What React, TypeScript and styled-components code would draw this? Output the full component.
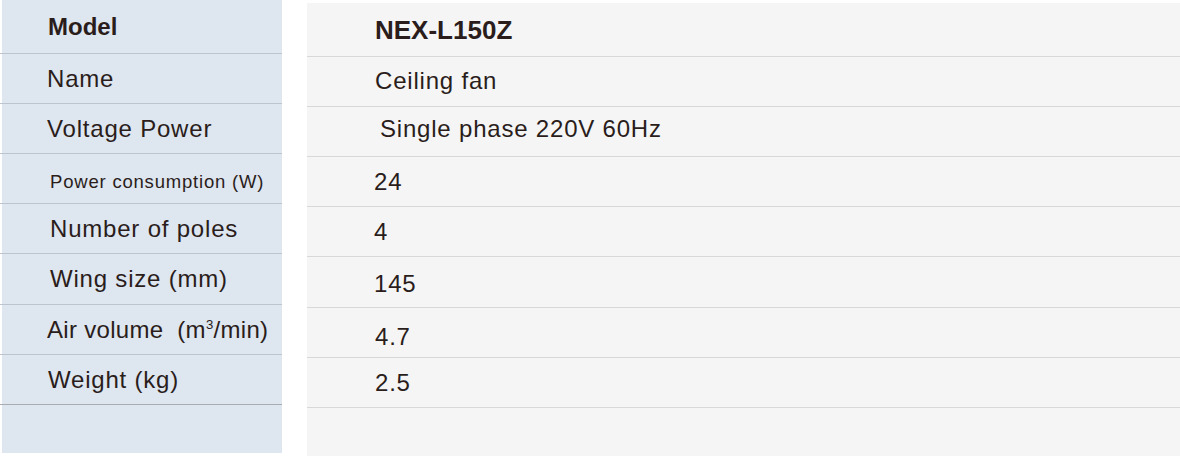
import React from "react";
import styled, { createGlobalStyle } from "styled-components";

const Global = createGlobalStyle`
  html, body { margin: 0; padding: 0; background: #ffffff; }
  body { font-family: "Liberation Sans", Arial, sans-serif; color: #2a1d1b; }
`;

const Page = styled.div`
  width: 1180px;
  height: 457px;
  display: flex;
  align-items: flex-start;
  gap: 25px;
  padding-left: 2px;
  box-sizing: border-box;
`;

const LabelPanel = styled.div`
  width: 280px;
  height: 453px;
  background: #dee6ef;
  display: flex;
  flex-direction: column;
`;

const ValuePanel = styled.div`
  flex: 1;
  height: 453px;
  margin-top: 3px;
  background: #f5f5f5;
  display: flex;
  flex-direction: column;
`;

const Row = styled.div<{ $h: number; $line: string; $indent: number }>`
  height: ${(p) => p.$h}px;
  flex: none;
  box-sizing: border-box;
  border-bottom: 1px solid ${(p) => p.$line};
  display: flex;
  align-items: center;
  padding-left: ${(p) => p.$indent}px;
`;

const LabelRow = styled(Row)`
  margin-left: -2px;
  padding-left: ${(p) => p.$indent + 2}px;
`;

const Text = styled.span<{ $bold?: boolean; $size: number; $dy?: number; $ls?: number }>`
  font-size: ${(p) => p.$size}px;
  font-weight: ${(p) => (p.$bold ? 700 : 400)};
  letter-spacing: ${(p) => (p.$bold ? 0 : p.$ls ?? 0.8)}px;
  line-height: 1;
  white-space: nowrap;
  position: relative;
  top: ${(p) => p.$dy ?? 0}px;
`;

const Sup = styled.sup`
  font-size: 0.55em;
  vertical-align: 0.7em;
  line-height: 0;
`;

type Spec = {
  label: React.ReactNode;
  labelIndent: number;
  labelSize: number;
  labelBold?: boolean;
  labelDy?: number;
  labelLs?: number;
  value: string;
  valueIndent: number;
  valueSize: number;
  valueBold?: boolean;
  valueDy?: number;
  h: number;
};

const rows: Spec[] = [
  { label: "Model", labelIndent: 46, labelSize: 24, labelBold: true, value: "NEX-L150Z", valueIndent: 68, valueSize: 26, valueBold: true, h: 54 },
  { label: "Name", labelIndent: 45, labelSize: 24, value: "Ceiling fan", valueIndent: 68, valueSize: 24, valueDy: -1, h: 50 },
  { label: "Voltage Power", labelIndent: 45, labelSize: 24, value: "Single phase 220V 60Hz", valueIndent: 73, valueSize: 24, valueDy: -3, h: 50 },
  { label: "Power consumption (W)", labelIndent: 48, labelSize: 18.5, labelDy: 4, value: "24", valueIndent: 67, valueSize: 24, h: 50 },
  { label: "Number of poles", labelIndent: 48, labelSize: 24, value: "4", valueIndent: 67, valueSize: 24, h: 50 },
  { label: "Wing size (mm)", labelIndent: 48, labelSize: 24, value: "145", valueIndent: 67, valueSize: 24, valueDy: 2, h: 51 },
  { label: <>Air volume&nbsp; (m<Sup>3</Sup>/min)</>, labelIndent: 45, labelSize: 24, labelLs: 0.3, value: "4.7", valueIndent: 68, valueSize: 24, valueDy: 4, h: 50 },
  { label: "Weight (kg)", labelIndent: 46, labelSize: 24, value: "2.5", valueIndent: 68, valueSize: 24, h: 50 },
];

export default function App() {
  return (
    <>
      <Global />
      <Page>
        <LabelPanel>
          {rows.map((r, i) => (
            <LabelRow
              key={i}
              $h={r.h}
              $indent={r.labelIndent}
              $line={i === rows.length - 1 ? "#a9adb2" : "#bcc4ce"}
            >
              <Text $size={r.labelSize} $bold={r.labelBold} $dy={r.labelDy} $ls={r.labelLs}>
                {r.label}
              </Text>
            </LabelRow>
          ))}
        </LabelPanel>
        <ValuePanel>
          {rows.map((r, i) => (
            <Row key={i} $h={r.h} $indent={r.valueIndent} $line="#d8d8d8">
              <Text $size={r.valueSize} $bold={r.valueBold} $dy={r.valueDy}>
                {r.value}
              </Text>
            </Row>
          ))}
        </ValuePanel>
      </Page>
    </>
  );
}
